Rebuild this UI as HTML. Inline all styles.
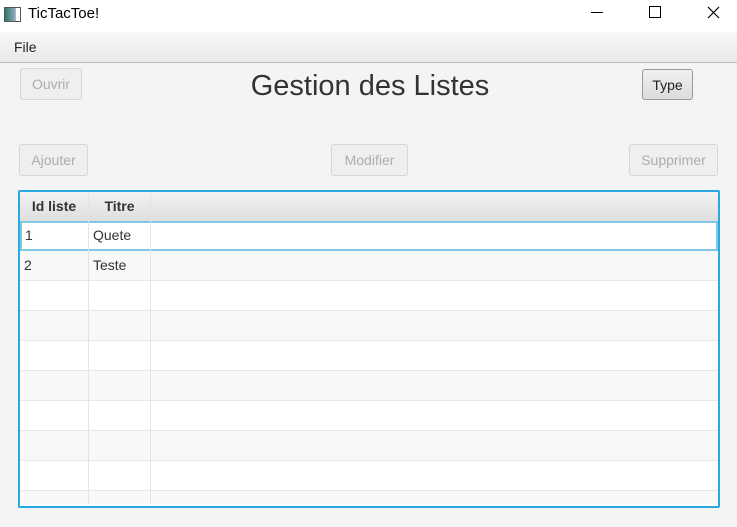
<!DOCTYPE html><html><head><style>
body{margin:0;width:737px;height:527px;background:#f4f4f4;font-family:"Liberation Sans",sans-serif;position:relative;overflow:hidden}
.a{position:absolute}
.tb{left:0;top:0;width:737px;height:32px;background:#fff}
.mb{left:0;top:32px;width:737px;height:30px;background:linear-gradient(#f8f8f8,#e9e9e9);border-bottom:1px solid #bcbcbc}
.btn{position:absolute;box-sizing:border-box;border:1px solid #d6d6d6;border-radius:3px;background:#efefef;color:#adadad;font-size:14px;text-align:center;line-height:30px}
.row{position:absolute;left:20px;width:698px;height:30px;border-bottom:1px solid #e8e8e8;box-sizing:border-box;font-size:14px;color:#333}
.row span{position:absolute;top:6px}
</style></head><body>
<div class="a tb"></div>
<div class="a" style="left:4px;top:7px;width:15px;height:13px;border:1px solid #555;background:linear-gradient(90deg,#2b7a6a,#9ab 70%,#fff 75%)"></div>
<div class="a" style="left:28px;top:5px;font-size:15px;color:#000">TicTacToe!</div>
<div class="a" style="left:591px;top:12px;width:12px;border-top:1px solid #000"></div>
<div class="a" style="left:649px;top:6px;width:10px;height:10px;border:1px solid #000"></div>
<svg class="a" style="left:707px;top:6px" width="13" height="13"><path d="M1 1L12 12M12 1L1 12" stroke="#000" stroke-width="1.2"/></svg>
<div class="a mb"></div>
<div class="a" style="left:14px;top:39px;font-size:14px;color:#222">File</div>
<div class="btn" style="left:20px;top:68px;width:62px;height:32px">Ouvrir</div>
<div class="a" style="left:0;width:740px;text-align:center;top:70px;font-size:29px;color:#333">Gestion des Listes</div>
<div class="btn" style="left:642px;top:69px;width:51px;height:31px;background:linear-gradient(#f0f0f0,#dcdcdc);border-color:#999;color:#222">Type</div>
<div class="btn" style="left:19px;top:144px;width:69px;height:32px">Ajouter</div>
<div class="btn" style="left:331px;top:144px;width:77px;height:32px">Modifier</div>
<div class="btn" style="left:629px;top:144px;width:89px;height:32px">Supprimer</div>
<div class="a" style="left:18px;top:190px;width:698px;height:314px;border:2px solid #29a9e0;background:#fff;border-radius:2px"></div>
<div class="a" style="left:20px;top:192px;width:698px;height:29px;background:linear-gradient(#f2f2f2,#dedede);border-bottom:1px solid #c8c8c8"></div>
<div class="a" style="left:20px;top:198px;width:68px;text-align:center;font-weight:bold;font-size:14px;color:#333">Id liste</div>
<div class="a" style="left:89px;top:198px;width:61px;text-align:center;font-weight:bold;font-size:14px;color:#333">Titre</div>
<div class="row" style="top:221px;background:#fff;border:2px solid #7fc8e6"><span style="left:3px;top:4px">1</span><span style="left:71px;top:4px">Quete</span></div>
<div class="row" style="top:251px;background:#f8f8f8"><span style="left:4px">2</span><span style="left:73px">Teste</span></div>
<div class="row" style="top:281px;background:#fff"></div>
<div class="row" style="top:311px;background:#f8f8f8"></div>
<div class="row" style="top:341px;background:#fff"></div>
<div class="row" style="top:371px;background:#f8f8f8"></div>
<div class="row" style="top:401px;background:#fff"></div>
<div class="row" style="top:431px;background:#f8f8f8"></div>
<div class="row" style="top:461px;background:#fff"></div>
<div class="row" style="top:491px;height:13px;background:#f8f8f8;border:0"></div>
<div class="a" style="left:88px;top:192px;height:312px;border-left:1px solid #e4e4e4"></div>
<div class="a" style="left:150px;top:192px;height:312px;border-left:1px solid #e4e4e4"></div>
</body></html>
